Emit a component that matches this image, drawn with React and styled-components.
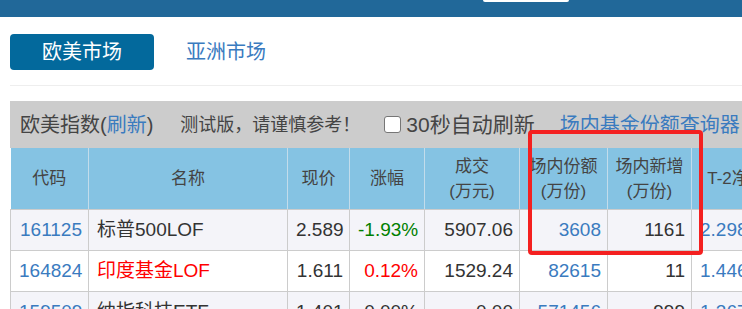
import React from 'react';
import styled, { createGlobalStyle } from 'styled-components';

const columns = [
  { key: 'code', title: '代码', width: 78 },
  { key: 'name', title: '名称', width: 199 },
  { key: 'price', title: '现价', width: 62 },
  { key: 'change', title: '涨幅', width: 75 },
  { key: 'volume', title: '成交', sub: '(万元)', width: 95 },
  { key: 'shares', title: '场内份额', sub: '(万份)', width: 88 },
  { key: 'added', title: '场内新增', sub: '(万份)', width: 84 },
  { key: 'nav', title: 'T-2净值', width: 90 },
  { key: 'date', title: '净值日期', width: 100 },
];

const rows = [
  { code: '161125', name: '标普500LOF', price: '2.589', change: '-1.93%', volume: '5907.06', shares: '3608', added: '1161', nav: '2.2980', date: '2025-04-07' },
  { code: '164824', name: '印度基金LOF', hot: true, price: '1.611', change: '0.12%', volume: '1529.24', shares: '82615', added: '11', nav: '1.4460', date: '2025-04-07' },
  { code: '159509', name: '纳指科技ETF', price: '1.401', change: '0.00%', volume: '0.00', shares: '571456', added: '999', nav: '1.3670', date: '2025-04-07' },
];

const changeColor = (v) => (v.startsWith('-') ? '#008000' : v === '0.00%' ? '#333' : '#ff0000');

export default function App() {
  return (
    <>
      <GlobalStyle />
      <TopBar>
        <SearchBox />
      </TopBar>
      <Page>
        <Tabs>
          <Tab $active>欧美市场</Tab>
          <Tab>亚洲市场</Tab>
        </Tabs>
        <Divider />
        <Panel>
          <TitleBar>
            <Title>欧美指数(<LinkText>刷新</LinkText>)</Title>
            <Notice>测试版，请谨慎参考！</Notice>
            <AutoRefresh>
              <CheckBox />
              30秒自动刷新
            </AutoRefresh>
            <QueryLink>场内基金份额查询器</QueryLink>
          </TitleBar>
          <Table>
            <colgroup>
              {columns.map((c) => (
                <col key={c.key} style={{ width: c.width }} />
              ))}
            </colgroup>
            <thead>
              <tr>
                {columns.map((c) => (
                  <Th key={c.key}>
                    {c.title}
                    {c.sub && (
                      <>
                        <br />
                        {c.sub}
                      </>
                    )}
                  </Th>
                ))}
              </tr>
            </thead>
            <tbody>
              {rows.map((r, i) => (
                <Row key={r.code} $odd={i % 2 === 0}>
                  <Td $align="right" $color="#3a7bbf">{r.code}</Td>
                  <Td $align="left" $color={r.hot ? '#ff0000' : '#333'}>{r.name}</Td>
                  <Td $align="right">{r.price}</Td>
                  <Td $align="right" $color={changeColor(r.change)}>{r.change}</Td>
                  <Td $align="right">{r.volume}</Td>
                  <Td $align="right" $color="#3a7bbf">{r.shares}</Td>
                  <Td $align="right">{r.added}</Td>
                  <Td $align="left" $color="#3a7bbf">{r.nav}</Td>
                  <Td $align="left">{r.date}</Td>
                </Row>
              ))}
            </tbody>
          </Table>
          <Highlight />
        </Panel>
      </Page>
    </>
  );
}

const GlobalStyle = createGlobalStyle`
  body {
    margin: 0;
    background: #fff;
    overflow: hidden;
    font-family: 'Liberation Sans', 'Noto Sans CJK SC', sans-serif;
    color: #333;
  }
`;

const TopBar = styled.div`
  height: 17px;
  background: #216899;
  display: flex;
  align-items: flex-start;
`;

const SearchBox = styled.div`
  margin-left: 483px;
  width: 86px;
  height: 2px;
  background: #fff;
  border-radius: 0 0 4px 4px;
`;

const Page = styled.div`
  padding: 17px 0 0 10px;
`;

const Tabs = styled.div`
  display: flex;
`;

const Tab = styled.div`
  width: 144px;
  height: 36px;
  display: flex;
  align-items: center;
  justify-content: center;
  border-radius: 4px;
  font-size: 20px;
  line-height: 24px;
  background: ${(p) => (p.$active ? '#03699c' : 'transparent')};
  color: ${(p) => (p.$active ? '#fff' : '#3a7bbf')};
`;

const Divider = styled.div`
  height: 1px;
  background: #eee;
  margin-top: 15px;
`;

const Panel = styled.div`
  position: relative;
  margin-top: 15px;
  width: 1000px;
`;

const TitleBar = styled.div`
  height: 47px;
  background: #cccccc;
  display: flex;
  align-items: center;
  padding-left: 10px;
  color: #444;
  white-space: nowrap;
  line-height: 24px;
`;

const Title = styled.span`
  font-size: 20px;
`;

const LinkText = styled.span`
  color: #3a7bbf;
`;

const Notice = styled.span`
  font-size: 18px;
  margin-left: 27px;
`;

const AutoRefresh = styled.label`
  display: flex;
  align-items: center;
  font-size: 21px;
  margin-left: 24px;
`;

const CheckBox = styled.span`
  width: 15px;
  height: 15px;
  border: 1px solid #767676;
  border-radius: 3px;
  background: #fff;
  margin-right: 5px;
`;

const QueryLink = styled.span`
  font-size: 20px;
  color: #3a7bbf;
  margin-left: 25px;
`;

const Table = styled.table`
  border-collapse: collapse;
  table-layout: fixed;
  width: 871px;
  font-size: 19px;
`;

const Th = styled.th`
  height: 61px;
  padding: 0 4px;
  background: #85c3e3;
  border-left: 1px solid #c2dceb;
  border-bottom: 1px solid #ccc;
  font-size: 17px;
  font-weight: normal;
  color: #444;
  line-height: 25px;
  text-align: center;
  white-space: nowrap;
  &:first-child {
    border-left: none;
  }
`;

const Row = styled.tr`
  background: ${(p) => (p.$odd ? '#f4f4f9' : '#fff')};
`;

const Td = styled.td`
  height: 40px;
  padding: 0 6px 0 8px;
  border: 1px solid #ccc;
  line-height: 22px;
  text-align: ${(p) => p.$align};
  color: ${(p) => p.$color || '#333'};
  white-space: nowrap;
  overflow: hidden;
`;

const Highlight = styled.div`
  position: absolute;
  left: 518px;
  top: 29px;
  width: 167px;
  height: 117px;
  border: 4px solid #f42020;
  border-radius: 4px;
  pointer-events: none;
`;
